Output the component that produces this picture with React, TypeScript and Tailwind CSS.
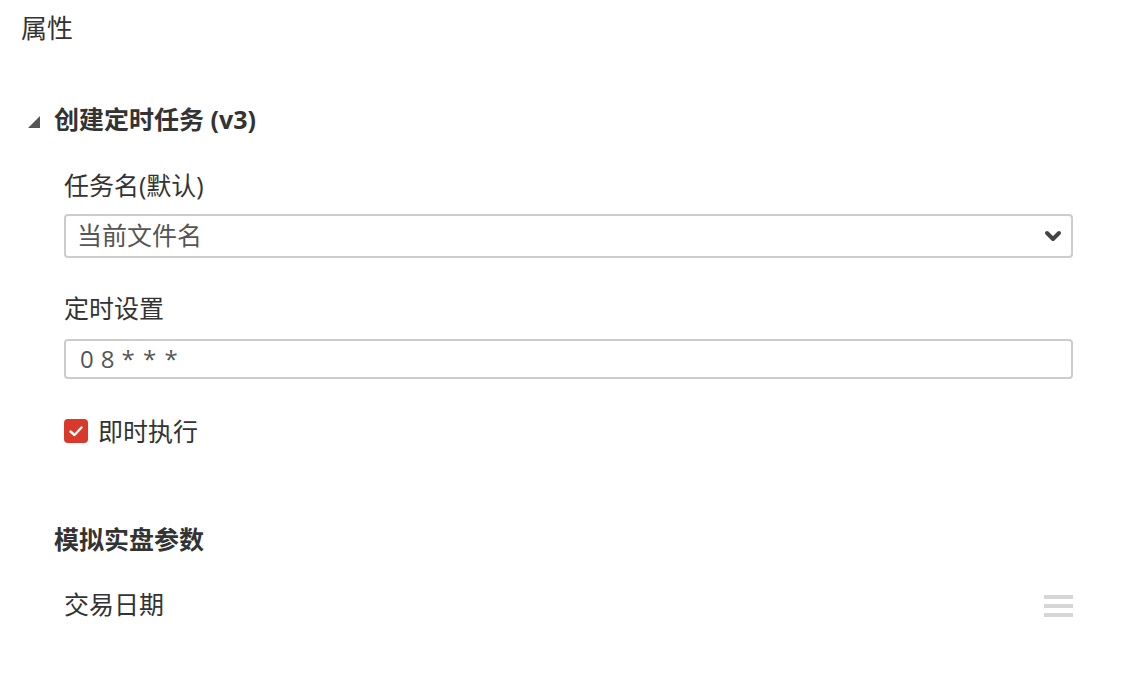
import { ChevronDown } from "lucide-react";

const font = { fontFamily: '"Open Sans", "Noto Sans CJK SC", sans-serif' };

export default function App() {
  return (
    <div className="w-[1126px] h-[698px] bg-white text-[#333]" style={font}>
      <div className="pl-[21px] pt-[11px]">
        <h1 className="text-[26px] leading-[34px]">属性</h1>
      </div>

      {/* task section */}
      <div className="mt-[57px] pl-[28px] flex items-center h-[34px]">
        <svg width="12" height="12" viewBox="0 0 12 12" className="mt-[5px]">
          <polygon points="12,0 12,12 0,12" fill="#555" />
        </svg>
        <span className="ml-[14px] text-[25px] leading-[34px] font-bold text-[#333]">创建定时任务 (v3)</span>
      </div>

      <div className="pl-[64px] pr-[53px]">
        <div className="mt-[32px] text-[25px] leading-[34px] text-[#333]">任务名(默认)</div>
        <div className="mt-[12px] h-[44px] border-2 border-[#ccc] rounded-[4px] flex items-center justify-between pl-[11px] pr-[6px]">
          <span className="text-[25px] text-[#555]">当前文件名</span>
          <ChevronDown size={24} strokeWidth={4} className="text-[#444]" />
        </div>

        <div className="mt-[33px] text-[25px] leading-[34px] text-[#333]">定时设置</div>
        <div className="mt-[14px] h-[40px] border-2 border-[#ccc] rounded-[4px] flex items-center pl-[14px]">
          <span className="text-[24px] text-[#555] flex gap-[7px]">
            <span>0</span>
            <span>8</span>
            <span className="tracking-[1px]">* * *</span>
          </span>
        </div>

        <label className="mt-[35px] h-[34px] flex items-center gap-[10px]">
          <span className="w-[24px] h-[24px] rounded-[4px] bg-[#d8392a] flex items-center justify-center">
            <svg width="16" height="16" viewBox="0 0 16 16">
              <polyline points="2.5,8.5 6.5,12 13.5,4.5" fill="none" stroke="#fff" strokeWidth="2.4" strokeLinecap="round" strokeLinejoin="round" />
            </svg>
          </span>
          <span className="text-[25px] leading-[34px] text-[#333]">即时执行</span>
        </label>
      </div>

      {/* sim params */}
      <div className="pl-[54px] mt-[74px] text-[25px] font-bold leading-[34px] text-[#333]">模拟实盘参数</div>
      <div className="pl-[64px] pr-[53px] mt-[31px] flex items-center justify-between h-[34px]">
        <span className="text-[25px] leading-[34px] text-[#333]">交易日期</span>
        <div className="flex flex-col gap-[5px] w-[29px] mt-[4px]">
          <div className="h-[4px] bg-[#d6d6d6]" />
          <div className="h-[4px] bg-[#d6d6d6]" />
          <div className="h-[4px] bg-[#d6d6d6]" />
        </div>
      </div>
    </div>
  );
}
